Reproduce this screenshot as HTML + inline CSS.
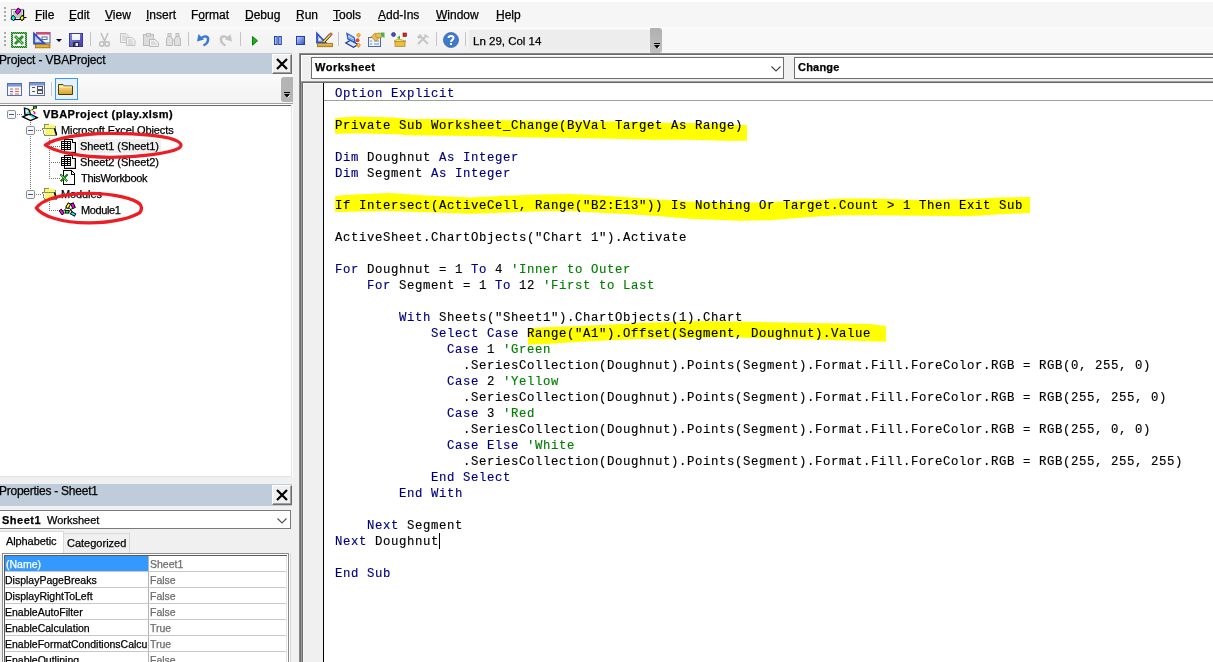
<!DOCTYPE html>
<html><head><meta charset="utf-8">
<style>
*{margin:0;padding:0;box-sizing:border-box}
html,body{width:1213px;height:662px;overflow:hidden;background:#f0f0f0;font-family:"Liberation Sans",sans-serif;position:relative}
.a{position:absolute}
.t{position:absolute;white-space:pre;line-height:12px;color:#000;-webkit-text-stroke:0.25px currentColor}
.ul{position:absolute;height:1px;background:#000}
.grip{position:absolute;width:2px;height:2px;background:#a9a9a9}
.mi{font-size:12px}
.title{position:absolute;background:#bfcddb}
.closeb{position:absolute;background:#f0f0f0;border:1px solid #fff;border-right-color:#6d6d6d;border-bottom-color:#6d6d6d;width:20px;height:20px;box-shadow:inset -1px -1px 0 #a0a0a0}
.sep{position:absolute;width:1px;height:14px;background:#c5c5c5;top:32px}
.code{font-family:"Liberation Mono",monospace;font-size:12.3px;letter-spacing:0.62px;line-height:16px;white-space:pre;color:#000;-webkit-text-stroke:0.15px currentColor}
.k{color:#00007f}
.c{color:#007f00}
.tr{font-size:11px;letter-spacing:-0.25px}
.pg{font-size:10.5px}
svg{position:absolute;overflow:visible}
</style></head><body>
<!-- menu bar -->
<div class="a" style="left:0;top:0;width:1213px;height:2px;background:#fff"></div>
<div class="a" style="left:0;top:2px;width:1213px;height:25px;background:#f6f6f6"></div>
<div class="grip" style="left:4px;top:7px"></div>
<div class="grip" style="left:4px;top:11px"></div>
<div class="grip" style="left:4px;top:15px"></div>
<div class="grip" style="left:4px;top:19px"></div>
<svg style="left:10px;top:7px" width="17" height="15" viewBox="0 0 17 15">
<rect x="1.5" y="2.5" width="12" height="10" fill="#fff" stroke="#8a8a8a" stroke-width="1.2"/>
<rect x="3" y="4" width="9" height="7" fill="#c4c4c4"/>
<path d="M1.5 12.5 H13.5 V3" fill="none" stroke="#000" stroke-width="1.2"/>
<path d="M8.3 1 L11 3.5 L7.8 7.3 L5.2 4.8Z" fill="#ff00ff" stroke="#000" stroke-width="1"/>
<path d="M3 8.2 L5.6 10.9 L3.6 13.9 L1 11.2Z" fill="#00ffff" stroke="#000" stroke-width="1"/>
<path d="M12.3 8.2 L14.2 10.9 L12 13.9 L10 11.2Z" fill="#ffff00" stroke="#000" stroke-width="1"/>
<path d="M14 10.5 H16.5" stroke="#000" stroke-width="1"/>
</svg>
<div class="t mi" style="left:35px;top:9px">File</div><div class="ul" style="left:35px;top:20px;width:6px"></div>
<div class="t mi" style="left:69px;top:9px">Edit</div><div class="ul" style="left:69px;top:20px;width:6px"></div>
<div class="t mi" style="left:105px;top:9px">View</div><div class="ul" style="left:105px;top:20px;width:7px"></div>
<div class="t mi" style="left:146px;top:9px">Insert</div><div class="ul" style="left:146px;top:20px;width:3px"></div>
<div class="t mi" style="left:191px;top:9px">Format</div><div class="ul" style="left:199px;top:20px;width:6px"></div>
<div class="t mi" style="left:245px;top:9px">Debug</div><div class="ul" style="left:245px;top:20px;width:8px"></div>
<div class="t mi" style="left:296px;top:9px">Run</div><div class="ul" style="left:296px;top:20px;width:7px"></div>
<div class="t mi" style="left:333px;top:9px">Tools</div><div class="ul" style="left:333px;top:20px;width:7px"></div>
<div class="t mi" style="left:378px;top:9px">Add-Ins</div><div class="ul" style="left:378px;top:20px;width:7px"></div>
<div class="t mi" style="left:436px;top:9px">Window</div><div class="ul" style="left:436px;top:20px;width:11px"></div>
<div class="t mi" style="left:496px;top:9px">Help</div><div class="ul" style="left:496px;top:20px;width:8px"></div>
<!-- toolbar -->
<div class="a" style="left:0;top:27px;width:1213px;height:2px;background:#fbfbfb"></div>
<div class="a" style="left:0;top:29px;width:1213px;height:24px;background:#f8f8f8"></div>
<div class="a" style="left:0;top:29px;width:662px;height:24px;background:linear-gradient(#f7f7f7,#f1f1f1)"></div>
<div class="grip" style="left:4px;top:32px"></div>
<div class="grip" style="left:4px;top:36px"></div>
<div class="grip" style="left:4px;top:40px"></div>
<div class="grip" style="left:4px;top:44px"></div>
<!-- excel -->
<svg style="left:11px;top:32px" width="16" height="16" viewBox="0 0 16 16">
<defs><pattern id="xck" width="2" height="2" patternUnits="userSpaceOnUse"><rect width="2" height="2" fill="#7cc07c"/><rect width="1" height="1" fill="#0f7a0f"/><rect x="1" y="1" width="1" height="1" fill="#0f7a0f"/></pattern></defs>
<rect x="0" y="0" width="16" height="16" fill="url(#xck)"/>
<rect x="2" y="2" width="12" height="12" fill="#fff"/>
<path d="M4 4 L12 12 M12 4 L4 12" stroke="#2f8f2f" stroke-width="3"/>
<path d="M4.5 4.5 L11.5 11.5" stroke="#d8f0d8" stroke-width=".7"/>
</svg>
<!-- userform -->
<svg style="left:33px;top:32px" width="18" height="16" viewBox="0 0 18 16">
<rect x="3.5" y="0.5" width="13.5" height="10.5" fill="#f4f6fb" stroke="#4a5a90" stroke-width="1"/>
<rect x="3" y="0" width="14" height="2.6" fill="#d04a78"/>
<rect x="9" y="5" width="5" height="2.5" fill="#fff" stroke="#5a6a98" stroke-width="1"/>
<path d="M1 1.5 L11.5 11.5 H1Z" fill="#b8c8f0" stroke="#2d50c8" stroke-width="1.8"/>
<circle cx="4.5" cy="8.5" r="1" fill="#fff"/>
<rect x="2.5" y="12.3" width="14.5" height="3.5" fill="#d8a020" stroke="#a07010" stroke-width=".8"/>
<path d="M4 13.5 V14.5 M6 13.5 V14.5 M8 13.5 V14.5 M10 13.5 V14.5 M12 13.5 V14.5 M14 13.5 V14.5" stroke="#fff0c0" stroke-width=".8"/>
</svg>
<svg style="left:56px;top:39px" width="6" height="3" viewBox="0 0 6 3"><path d="M0 0 H6 L3 3Z" fill="#000"/></svg>
<!-- save -->
<svg style="left:69px;top:33px" width="14" height="14" viewBox="0 0 14 14">
<defs><linearGradient id="gsv" x1="0" y1="0" x2="1" y2="1"><stop offset="0" stop-color="#8a8ae8"/><stop offset="1" stop-color="#3a3aa8"/></linearGradient></defs>
<rect x="0" y="0" width="14" height="14" fill="url(#gsv)"/>
<rect x="0.5" y="0.5" width="13" height="13" fill="none" stroke="#3a3a90" stroke-width="1"/>
<rect x="3" y="1" width="8" height="6" fill="#f4f4ff"/>
<rect x="4" y="9" width="6" height="5" fill="#2a2a50"/>
<rect x="6.5" y="10" width="2.5" height="3" fill="#e8e8f0"/>
</svg>
<div class="sep" style="left:90px"></div>
<!-- cut -->
<svg style="left:99px;top:33px" width="11" height="14" viewBox="0 0 11 14">
<path d="M2 0 L6 9 M9 0 L5 9" stroke="#bdbdbd" stroke-width="1.5"/>
<circle cx="2.8" cy="11" r="2.2" fill="none" stroke="#bdbdbd" stroke-width="1.5"/>
<circle cx="8.2" cy="11" r="2.2" fill="none" stroke="#bdbdbd" stroke-width="1.5"/>
</svg>
<!-- copy -->
<svg style="left:120px;top:33px" width="16" height="13" viewBox="0 0 16 13">
<path d="M0.5 0.5 H6 L8 2.5 V9.5 H0.5Z" fill="#f0f0f0" stroke="#c2c2c2"/>
<path d="M6.5 4.5 H12 L15 7.5 V12.5 H6.5Z" fill="#f0f0f0" stroke="#c2c2c2"/>
<path d="M2 3 H6 M2 5 H6 M2 7 H6 M8 7 H12 M8 9 H13 M8 11 H13" stroke="#c8c8c8"/>
</svg>
<!-- paste -->
<svg style="left:143px;top:33px" width="16" height="14" viewBox="0 0 16 14">
<rect x="0.5" y="1.5" width="10" height="11" fill="#dcdcdc" stroke="#bababa"/>
<rect x="3.5" y="0.5" width="4" height="2.5" fill="#e8e8e8" stroke="#bababa"/>
<path d="M6.5 6.5 H12 L15.5 9.5 V13.5 H6.5Z" fill="#f0f0f0" stroke="#bababa"/>
<path d="M8 9 H12 M8 11 H14" stroke="#c8c8c8"/>
</svg>
<!-- find -->
<svg style="left:166px;top:33px" width="15" height="13" viewBox="0 0 15 13">
<rect x="2" y="0.5" width="3" height="3" fill="#e0e0e0" stroke="#bdbdbd"/>
<rect x="10" y="0.5" width="3" height="3" fill="#e0e0e0" stroke="#bdbdbd"/>
<path d="M0.5 12.5 V6 L2 3.5 H5 L6.5 6 V12.5Z M8.5 12.5 V6 L10 3.5 H13 L14.5 6 V12.5Z" fill="#e0e0e0" stroke="#bababa"/>
<rect x="6.5" y="6" width="2" height="3" fill="#cfcfcf"/>
</svg>
<div class="sep" style="left:188px"></div>
<!-- undo -->
<svg style="left:197px;top:33px" width="13" height="13" viewBox="0 0 13 13">
<path d="M4 5.5 C 7 2, 12 3, 11 7.5 C 10.5 10, 8.5 11.5, 6.5 12.5" fill="none" stroke="#3a78d8" stroke-width="2.4"/>
<path d="M0 8.5 L1.5 1 L7 6.5Z" fill="#3a78d8"/>
</svg>
<!-- redo -->
<svg style="left:219px;top:33px" width="13" height="13" viewBox="0 0 13 13">
<path d="M9 5.5 C 6 2, 1 3, 2 7.5 C 2.5 10, 4.5 11.5, 6.5 12.5" fill="none" stroke="#c4c4c4" stroke-width="2.4"/>
<path d="M13 8.5 L11.5 1 L6 6.5Z" fill="#c4c4c4"/>
</svg>
<div class="sep" style="left:240px"></div>
<!-- run -->
<svg style="left:252px;top:36px" width="6" height="10" viewBox="0 0 6 10"><path d="M0.5 0.5 L5.5 4.8 L0.5 9.2Z" fill="#20b020" stroke="#0a7a0a" stroke-width="1"/></svg>
<!-- pause -->
<svg style="left:274px;top:36px" width="8" height="9" viewBox="0 0 8 9">
<rect x="0.5" y="0.5" width="2.6" height="8" fill="#a8c0f4" stroke="#2040b0"/><rect x="4.7" y="0.5" width="2.6" height="8" fill="#a8c0f4" stroke="#2040b0"/>
</svg>
<!-- stop -->
<svg style="left:296px;top:36px" width="9" height="9" viewBox="0 0 9 9"><defs><linearGradient id="gs" x1="0" y1="0" x2="1" y2="1"><stop offset="0" stop-color="#c8d4f8"/><stop offset="1" stop-color="#3050c8"/></linearGradient></defs><rect x="0.5" y="0.5" width="8" height="8" fill="url(#gs)" stroke="#2040a8"/></svg>
<!-- design mode -->
<svg style="left:316px;top:32px" width="17" height="15" viewBox="0 0 17 15">
<path d="M1 1.5 L9.5 10.5 H1Z" fill="#b0c4f0" stroke="#2d50c8" stroke-width="1.8"/>
<circle cx="3.8" cy="7.6" r="1" fill="#fff"/>
<path d="M7.5 10 L14.5 2.5" stroke="#2a2a2a" stroke-width="3.2"/>
<path d="M7.5 10 L14.5 2.5" stroke="#f4d050" stroke-width="1.8"/>
<circle cx="15" cy="2" r="1.6" fill="#d86050"/>
<rect x="1.5" y="11.3" width="15" height="3.4" fill="#d8a020" stroke="#a07010" stroke-width=".8"/>
<path d="M3 12.3 V13.3 M5 12.3 V13.3 M7 12.3 V13.3 M9 12.3 V13.3 M11 12.3 V13.3 M13 12.3 V13.3 M15 12.3 V13.3" stroke="#fff0c0" stroke-width=".8"/>
</svg>
<div class="sep" style="left:338px"></div>
<!-- project explorer -->
<svg style="left:345px;top:32px" width="17" height="16" viewBox="0 0 17 16">
<path d="M0.8 11 L8.5 15.2 L13 12.5 L5.5 8.3Z" fill="#dfe8f8" stroke="#1d3a8a" stroke-width="1.2"/>
<path d="M2 1.5 L9 5.5 L10 10.5 L3 7Z" fill="#eaf0fc" stroke="#2a5ad0" stroke-width="1.4"/>
<path d="M3.5 3 L8 5.5 M4 5.5 L8.5 8" stroke="#5a9af0" stroke-width="1.1"/>
<path d="M13.5 1 L15.5 3 L13.5 5.5 L11.5 3Z" fill="#f0c040" stroke="#c08000" stroke-width=".7"/>
<circle cx="12.5" cy="8.2" r="2" fill="#e84830"/>
<path d="M13.5 11 L15.5 13 L13.5 15.5 L11.5 13Z" fill="#f0c040" stroke="#c08000" stroke-width=".7"/>
</svg>
<!-- properties -->
<svg style="left:368px;top:32px" width="17" height="15" viewBox="0 0 17 15">
<rect x="0.5" y="5.5" width="12" height="9" fill="#eef2fa" stroke="#4a6aa8"/>
<path d="M2 9 H4 M6 9 H11 M2 12 H4 M6 12 H11" stroke="#7a8ab8"/>
<path d="M3 5 L7 1 L12 5 L8 9Z" fill="#e8c050" stroke="#b08020" stroke-width=".7"/>
<ellipse cx="11" cy="3.5" rx="3.5" ry="2.5" fill="#e8c050" stroke="#b08020" stroke-width=".7"/>
<path d="M13 0.5 L16.5 0.5 L16.5 6 L13 4Z" fill="#50b050"/>
</svg>
<!-- object browser -->
<svg style="left:391px;top:32px" width="17" height="15" viewBox="0 0 17 15">
<circle cx="2.5" cy="2.5" r="2" fill="#4050d0" stroke="#202070" stroke-width=".6"/>
<path d="M6 5.5 L9 3.5 V7.5Z" fill="#40b040"/>
<rect x="12" y="1" width="3.5" height="3.5" fill="#e02020" stroke="#801010" stroke-width=".6"/>
<path d="M3 9 L7 7 L15 9 L11 11Z" fill="#f8e070" stroke="#b09020" stroke-width=".7"/>
<rect x="4" y="9.5" width="10" height="5" fill="#e8c040" stroke="#b08020" stroke-width=".7"/>
</svg>
<!-- toolbox -->
<svg style="left:417px;top:34px" width="12" height="11" viewBox="0 0 12 11">
<path d="M1 10 L9 2 M3 2 L11 10" stroke="#c4c4c4" stroke-width="2"/>
<path d="M0 3 L3 0 L5 2 L2 5Z M8 0 L12 3 L11 4 L7 1Z" fill="#c4c4c4"/>
</svg>
<div class="sep" style="left:436px"></div>
<!-- help -->
<svg style="left:443px;top:32px" width="16" height="16" viewBox="0 0 16 16">
<circle cx="8" cy="8" r="7.6" fill="#3d79cc"/>
<circle cx="8" cy="8" r="7.6" fill="none" stroke="#2a5aa8" stroke-width=".6"/>
<path d="M5.5 6 C5.5 3.2, 10.5 3.2, 10.5 6 C10.5 7.8, 8 8, 8 10" fill="none" stroke="#fff" stroke-width="2"/>
<rect x="7" y="11" width="2" height="2" fill="#fff"/>
</svg>
<div class="sep" style="left:465px"></div>
<div class="a" style="left:469px;top:30px;width:181px;height:20px;background:#ededed"></div>
<div class="t" style="left:473px;top:35px;font-size:11.5px;line-height:12px">Ln 29, Col 14</div>
<div class="a" style="left:650px;top:28px;width:12px;height:25px;background:linear-gradient(#b0b0b0,#c0c0c0);border-radius:1px 3px 3px 1px"></div>
<svg style="left:653px;top:43px" width="8" height="6" viewBox="0 0 8 6"><path d="M1 0.5 H7" stroke="#000"/><path d="M1 2 H7 L4 5.5Z" fill="#000"/><path d="M5 5 L7 3" stroke="#fff"/></svg>
<!-- project window -->
<div class="title" style="left:0;top:53px;width:292px;height:21px"></div>
<div class="t" style="left:-1px;top:54px;font-size:12px;letter-spacing:-0.15px">Project - VBAProject</div>
<div class="closeb" style="left:272px;top:54px"></div>
<svg style="left:276px;top:58px" width="12" height="12" viewBox="0 0 12 12"><path d="M1 1 L11 11 M11 1 L1 11" stroke="#000" stroke-width="2.2"/></svg>
<div class="a" style="left:0;top:74px;width:293px;height:29px;background:linear-gradient(#fbfbfb,#f3f3f3)"></div>
<!-- view code -->
<svg style="left:7px;top:83px" width="15" height="13" viewBox="0 0 15 13">
<rect x="0.5" y="0.5" width="14" height="12" fill="#f4f6fc" stroke="#5570b0"/>
<rect x="1" y="1" width="13" height="2.5" fill="#7a98d8"/>
<path d="M3 6 H6 M8 6 H12 M3 8.5 H6 M8 8.5 H12 M3 11 H6 M8 11 H12" stroke="#e86a40" stroke-width="1.2"/>
<path d="M3 8.5 H6" stroke="#5a7ab8" stroke-width="1.2"/>
</svg>
<!-- view object -->
<svg style="left:29px;top:82px" width="16" height="14" viewBox="0 0 16 14">
<rect x="0.5" y="0.5" width="15" height="13" fill="#f4f6fc" stroke="#5570b0"/>
<rect x="1" y="1" width="14" height="2.5" fill="#7a98d8"/>
<path d="M3 5.5 H6 M3 9.5 H6" stroke="#555" stroke-width="1"/>
<rect x="8.5" y="4.5" width="5" height="3" fill="#f0f0f0" stroke="#555"/>
<rect x="8.5" y="8.5" width="5" height="3" fill="#f0f0f0" stroke="#555"/>
</svg>
<div class="a" style="left:51px;top:82px;width:1px;height:14px;background:#c8c8c8"></div>
<div class="a" style="left:55px;top:78px;width:23px;height:22px;border:1px solid #3399ff;background:#e5f1fb"></div>
<svg style="left:58px;top:83px" width="15" height="12" viewBox="0 0 15 12">
<defs><linearGradient id="gf" x1="0" y1="0" x2="0" y2="1"><stop offset="0" stop-color="#f8e8a0"/><stop offset="1" stop-color="#d8a020"/></linearGradient></defs>
<path d="M0.5 1.5 H5 L6.5 3 H14.5 V11.5 H0.5Z" fill="url(#gf)" stroke="#4a3a10" stroke-width="1"/>
<path d="M1 4 H14" stroke="#fff3c0"/>
</svg>
<div class="a" style="left:281px;top:77px;width:12px;height:25px;background:#b4b4b4;border-radius:3px 0 0 3px"></div>
<svg style="left:283px;top:92px" width="8" height="8" viewBox="0 0 8 8"><path d="M1 0.5 H7" stroke="#000"/><path d="M1 2 H7 L4 5.5Z" fill="#000"/><path d="M4.5 5.5 L7 3" stroke="#fff"/></svg>

<!-- tree view -->
<div class="a" style="left:0;top:103px;width:293px;height:1px;background:#a0a0a0"></div>
<div class="a" style="left:0;top:104px;width:293px;height:1px;background:#fff"></div>
<div class="a" style="left:0;top:105px;width:291px;height:1px;background:#696969"></div>
<div class="a" style="left:0;top:106px;width:291px;height:370px;background:#fff"></div>
<div class="a" style="left:291px;top:105px;width:1px;height:372px;background:#e3e3e3"></div>
<div class="a" style="left:292px;top:104px;width:1px;height:373px;background:#fff"></div>
<div class="a" style="left:0;top:476px;width:292px;height:1px;background:#e3e3e3"></div>
<svg style="left:0;top:104px" width="292" height="130" viewBox="0 104 292 130" shape-rendering="crispEdges">
<g fill="#777">
<!-- dotted lines -->
<rect x="17" y="114" width="1" height="1"/><rect x="19" y="114" width="1" height="1"/><rect x="21" y="114" width="1" height="1"/>
<rect x="30" y="122" width="1" height="1"/><rect x="30" y="124" width="1" height="1"/>
<rect x="30" y="136" width="1" height="1"/><rect x="30" y="138" width="1" height="1"/><rect x="30" y="140" width="1" height="1"/><rect x="30" y="142" width="1" height="1"/><rect x="30" y="144" width="1" height="1"/><rect x="30" y="146" width="1" height="1"/><rect x="30" y="148" width="1" height="1"/><rect x="30" y="150" width="1" height="1"/><rect x="30" y="152" width="1" height="1"/><rect x="30" y="154" width="1" height="1"/><rect x="30" y="156" width="1" height="1"/><rect x="30" y="158" width="1" height="1"/><rect x="30" y="160" width="1" height="1"/><rect x="30" y="162" width="1" height="1"/><rect x="30" y="164" width="1" height="1"/><rect x="30" y="166" width="1" height="1"/><rect x="30" y="168" width="1" height="1"/><rect x="30" y="170" width="1" height="1"/><rect x="30" y="172" width="1" height="1"/><rect x="30" y="174" width="1" height="1"/><rect x="30" y="176" width="1" height="1"/><rect x="30" y="178" width="1" height="1"/><rect x="30" y="180" width="1" height="1"/><rect x="30" y="182" width="1" height="1"/><rect x="30" y="184" width="1" height="1"/><rect x="30" y="186" width="1" height="1"/><rect x="30" y="188" width="1" height="1"/>
<rect x="36" y="130" width="1" height="1"/><rect x="38" y="130" width="1" height="1"/><rect x="40" y="130" width="1" height="1"/>
<rect x="36" y="194" width="1" height="1"/><rect x="38" y="194" width="1" height="1"/><rect x="40" y="194" width="1" height="1"/>
<rect x="49" y="138" width="1" height="1"/><rect x="49" y="140" width="1" height="1"/><rect x="49" y="142" width="1" height="1"/><rect x="49" y="144" width="1" height="1"/><rect x="49" y="146" width="1" height="1"/><rect x="49" y="148" width="1" height="1"/><rect x="49" y="150" width="1" height="1"/><rect x="49" y="152" width="1" height="1"/><rect x="49" y="154" width="1" height="1"/><rect x="49" y="156" width="1" height="1"/><rect x="49" y="158" width="1" height="1"/><rect x="49" y="160" width="1" height="1"/><rect x="49" y="162" width="1" height="1"/><rect x="49" y="164" width="1" height="1"/><rect x="49" y="166" width="1" height="1"/><rect x="49" y="168" width="1" height="1"/><rect x="49" y="170" width="1" height="1"/><rect x="49" y="172" width="1" height="1"/><rect x="49" y="174" width="1" height="1"/><rect x="49" y="176" width="1" height="1"/><rect x="49" y="178" width="1" height="1"/>
<rect x="51" y="146" width="1" height="1"/><rect x="53" y="146" width="1" height="1"/><rect x="55" y="146" width="1" height="1"/><rect x="57" y="146" width="1" height="1"/><rect x="59" y="146" width="1" height="1"/>
<rect x="51" y="162" width="1" height="1"/><rect x="53" y="162" width="1" height="1"/><rect x="55" y="162" width="1" height="1"/><rect x="57" y="162" width="1" height="1"/><rect x="59" y="162" width="1" height="1"/>
<rect x="51" y="178" width="1" height="1"/><rect x="53" y="178" width="1" height="1"/><rect x="55" y="178" width="1" height="1"/><rect x="57" y="178" width="1" height="1"/><rect x="59" y="178" width="1" height="1"/>
<rect x="49" y="202" width="1" height="1"/><rect x="49" y="204" width="1" height="1"/><rect x="49" y="206" width="1" height="1"/><rect x="49" y="208" width="1" height="1"/><rect x="49" y="210" width="1" height="1"/>
<rect x="51" y="210" width="1" height="1"/><rect x="53" y="210" width="1" height="1"/><rect x="55" y="210" width="1" height="1"/><rect x="57" y="210" width="1" height="1"/><rect x="59" y="210" width="1" height="1"/>
</g>
<!-- expanders -->
<g shape-rendering="auto">
<rect x="7.5" y="110.5" width="8" height="8" rx="1.2" fill="#f6f6f6" stroke="#8e8e8e" stroke-width="1"/>
<rect x="9" y="114" width="5" height="1" fill="#3c5aa8"/>
<rect x="26.5" y="126.5" width="8" height="8" rx="1.2" fill="#f6f6f6" stroke="#8e8e8e" stroke-width="1"/>
<rect x="28" y="130" width="5" height="1" fill="#3c5aa8"/>
<rect x="26.5" y="190.5" width="8" height="8" rx="1.2" fill="#f6f6f6" stroke="#8e8e8e" stroke-width="1"/>
<rect x="28" y="194" width="5" height="1" fill="#3c5aa8"/>
</g>
</svg>
<!-- VBAProject icon -->
<svg style="left:22px;top:106px" width="16" height="16" viewBox="0 0 16 16">
<path d="M0.8 10.8 L8.5 14.6 L15.2 11.6 L7.5 7.8Z" fill="#fff" stroke="#000" stroke-width="1.4"/>
<path d="M2.5 2.2 L6.8 3.5 L8.6 8.8 L2.8 8.2Z" fill="#fff" stroke="#000" stroke-width="1.4"/>
<path d="M3.6 3.2 L5.6 4.2 M4.8 6 L7.4 7.4 M8.8 9.6 L12 11.6" stroke="#00e8f0" stroke-width="1.3"/>
<path d="M8 5 L11 3.5 L12.5 1.5 M11.5 5 L12.5 6.5" stroke="#000" stroke-width="1"/>
<rect x="8.5" y="3.8" width="2.8" height="1.5" fill="#f0e800"/>
<rect x="11.5" y="0.4" width="3.2" height="1.8" fill="#00d800" stroke="#000" stroke-width=".6"/>
<rect x="11.6" y="6" width="1.8" height="2.2" fill="#f000f0"/>
</svg>
<div class="t" style="left:43px;top:108px;font-size:11px;font-weight:bold;letter-spacing:0.45px">VBAProject (play.xlsm)</div>
<!-- folder 1 -->
<svg style="left:42px;top:124px" width="16" height="13" viewBox="0 0 16 13" shape-rendering="crispEdges">
<defs><pattern id="dth" width="2" height="2" patternUnits="userSpaceOnUse"><rect width="2" height="2" fill="#f4f4d0"/><rect width="1" height="1" fill="#ffff00"/><rect x="1" y="1" width="1" height="1" fill="#ffff00"/></pattern></defs>
<path d="M2.5 0.5 H6.5 L7.5 1.5 V2.5 H13.5 V11.5 H2.5Z" fill="#fff" stroke="#888"/>
<rect x="3" y="1" width="10" height="4" fill="url(#dth)"/>
<path d="M0.5 4.5 H13.5 L14.5 11.5 H2.5Z" fill="#fff" stroke="#888"/>
<rect x="3" y="5" width="10" height="6" fill="url(#dth)"/>
<path d="M12.5 4.5 L14.5 11" stroke="#000" stroke-width="1.6" shape-rendering="auto"/>
</svg>
<div class="t tr" style="left:61px;top:124px;letter-spacing:-0.1px">Microsoft Excel Objects</div>
<!-- sheet icons -->
<svg style="left:61px;top:139px" width="16" height="14" viewBox="0 0 16 14" shape-rendering="crispEdges">
<path d="M3.5 0.5 H11.5 L14.5 3.5 V13.5 H3.5Z" fill="#f8f8f8" stroke="#000"/><path d="M13.5 4 V12.5 H4.5" fill="none" stroke="#c8c8c8"/><path d="M11.5 0.5 V3.5 H14.5" fill="#fff" stroke="#000"/>
<rect x="0" y="2" width="10" height="9" fill="#000"/>
<g fill="#fff"><rect x="1" y="3" width="2" height="1"/><rect x="4" y="3" width="2" height="1"/><rect x="7" y="3" width="2" height="1"/><rect x="1" y="5" width="2" height="1"/><rect x="4" y="5" width="2" height="1"/><rect x="7" y="5" width="2" height="1"/><rect x="1" y="7" width="2" height="1"/><rect x="4" y="7" width="2" height="1"/><rect x="7" y="7" width="2" height="1"/><rect x="1" y="9" width="2" height="1"/><rect x="4" y="9" width="2" height="1"/><rect x="7" y="9" width="2" height="1"/></g>
</svg>
<div class="a" style="left:78px;top:139px;width:83px;height:14px;background:#f0f0f0"></div>
<div class="t tr" style="left:80px;top:140px;letter-spacing:-0.08px">Sheet1 (Sheet1)</div>
<svg style="left:61px;top:155px" width="16" height="14" viewBox="0 0 16 14" shape-rendering="crispEdges">
<path d="M3.5 0.5 H11.5 L14.5 3.5 V13.5 H3.5Z" fill="#f8f8f8" stroke="#000"/><path d="M13.5 4 V12.5 H4.5" fill="none" stroke="#c8c8c8"/><path d="M11.5 0.5 V3.5 H14.5" fill="#fff" stroke="#000"/>
<rect x="0" y="2" width="10" height="9" fill="#000"/>
<g fill="#fff"><rect x="1" y="3" width="2" height="1"/><rect x="4" y="3" width="2" height="1"/><rect x="7" y="3" width="2" height="1"/><rect x="1" y="5" width="2" height="1"/><rect x="4" y="5" width="2" height="1"/><rect x="7" y="5" width="2" height="1"/><rect x="1" y="7" width="2" height="1"/><rect x="4" y="7" width="2" height="1"/><rect x="7" y="7" width="2" height="1"/><rect x="1" y="9" width="2" height="1"/><rect x="4" y="9" width="2" height="1"/><rect x="7" y="9" width="2" height="1"/></g>
</svg>
<div class="t tr" style="left:80px;top:156px;letter-spacing:-0.08px">Sheet2 (Sheet2)</div>
<!-- workbook -->
<svg style="left:59px;top:170px" width="17" height="16" viewBox="0 0 17 16" shape-rendering="crispEdges">
<path d="M4.5 0.5 H12 L15.5 4 V14.5 H4.5Z" fill="#fff" stroke="#000"/><path d="M12 0.5 V4 H15.5" fill="#fff" stroke="#000"/>
<path d="M1.5 4.5 L8.5 11.5 M8.5 4.5 L1.5 11.5" stroke="#1a8a1a" stroke-width="2.5"/>
<path d="M2 5 L8 11" stroke="#c0e8c0" stroke-width=".7"/>
</svg>
<div class="t tr" style="left:81px;top:172px;letter-spacing:-0.33px">ThisWorkbook</div>
<!-- folder 2 -->
<svg style="left:42px;top:188px" width="16" height="13" viewBox="0 0 16 13" shape-rendering="crispEdges">
<defs><pattern id="dth" width="2" height="2" patternUnits="userSpaceOnUse"><rect width="2" height="2" fill="#f4f4d0"/><rect width="1" height="1" fill="#ffff00"/><rect x="1" y="1" width="1" height="1" fill="#ffff00"/></pattern></defs>
<path d="M2.5 0.5 H6.5 L7.5 1.5 V2.5 H13.5 V11.5 H2.5Z" fill="#fff" stroke="#888"/>
<rect x="3" y="1" width="10" height="4" fill="url(#dth)"/>
<path d="M0.5 4.5 H13.5 L14.5 11.5 H2.5Z" fill="#fff" stroke="#888"/>
<rect x="3" y="5" width="10" height="6" fill="url(#dth)"/>
<path d="M12.5 4.5 L14.5 11" stroke="#000" stroke-width="1.6" shape-rendering="auto"/>
</svg>
<div class="t tr" style="left:61px;top:188px;letter-spacing:-0.1px">Modules</div>
<!-- module icon -->
<svg style="left:59px;top:202px" width="18" height="15" viewBox="0 0 18 15">
<path d="M4 9.5 L8.5 5 M10 5.5 L15 12 M13.5 6 L9.5 10" stroke="#000" stroke-width="1"/>
<g stroke="#000" stroke-width=".9">
<rect x="7.8" y="1.2" width="2.8" height="5" fill="#ffff00" transform="rotate(30 9.2 3.7)"/>
<rect x="12.6" y="1.2" width="2.8" height="5" fill="#ff00ff" transform="rotate(-25 14 3.7)"/>
<rect x="1.3" y="7.5" width="2.8" height="5" fill="#ff00ff" transform="rotate(-35 2.7 10)"/>
<rect x="6.3" y="8.5" width="3.6" height="2.6" fill="#00ff00"/>
<rect x="11.8" y="10.6" width="4.6" height="2.6" fill="#00ffff" transform="rotate(30 14.1 11.9)"/>
</g>
</svg>
<div class="t tr" style="left:81px;top:204px;letter-spacing:-0.4px">Module1</div>
<!-- red ellipses -->
<svg style="left:0;top:0" width="300" height="240" viewBox="0 0 300 240">
<path d="M45.2 145 C 55 138, 80 133.5, 110 133.3 C 140 133.3, 170 136, 178 141.5 C 182 144, 182 146.5, 178 148.7 C 170 153, 140 157.4, 110 157.4 C 80 157, 55 152, 45.2 145 Z" fill="none" stroke="#ee1c24" stroke-width="3.2" stroke-linejoin="round"/>
<path d="M36.3 207.9 C 42 200, 60 193.5, 89 193.3 C 115 193.3, 135 199, 139.8 204 C 142 206.5, 142 209.5, 139.8 212.6 C 133 217, 115 222.9, 89 222.9 C 60 222.9, 42 215.5, 36.3 207.9 Z" fill="none" stroke="#ee1c24" stroke-width="3.3" stroke-linejoin="round"/>
</svg>
<!-- properties window -->
<div class="title" style="left:0;top:484px;width:292px;height:22px"></div>
<div class="t" style="left:-1px;top:485px;font-size:12px;letter-spacing:-0.25px">Properties - Sheet1</div>
<div class="closeb" style="left:272px;top:485px"></div>
<svg style="left:276px;top:489px" width="12" height="12" viewBox="0 0 12 12"><path d="M1 1 L11 11 M11 1 L1 11" stroke="#000" stroke-width="2.2"/></svg>
<div class="a" style="left:0;top:506px;width:293px;height:156px;background:#f0f0f0"></div>
<div class="a" style="left:0;top:510px;width:291px;height:19px;background:#fff;border:1px solid #7a7a7a;border-left:none"></div>
<div class="t" style="left:2px;top:514px;font-size:11px;font-weight:bold;letter-spacing:0.5px">Sheet1</div>
<div class="t" style="left:47px;top:514px;font-size:11px">Worksheet</div>
<svg style="left:277px;top:518px" width="10" height="6" viewBox="0 0 10 6"><path d="M0.5 0.5 L5 5 L9.5 0.5" fill="none" stroke="#555" stroke-width="1.2"/></svg>
<!-- tabs -->
<div class="a" style="left:0;top:531px;width:64px;height:23px;background:#fff;border:1px solid #d9d9d9;border-left:none;border-bottom:none"></div>
<div class="t tr" style="left:6px;top:535px;letter-spacing:-0.1px">Alphabetic</div>
<div class="a" style="left:63px;top:533px;width:67px;height:20px;background:#f0f0f0;border:1px solid #d9d9d9;border-bottom:none"></div>
<div class="t tr" style="left:67px;top:537px;letter-spacing:0">Categorized</div>
<!-- grid -->
<div class="a" style="left:2px;top:553px;width:288px;height:109px;background:#8c8c8c"></div>
<div class="a" style="left:3px;top:554px;width:286px;height:108px;background:#fff"></div>
<div class="a" style="left:4px;top:555px;width:284px;height:107px;background:#5a5a5a"></div>
<div class="a" style="left:5px;top:556px;width:282px;height:106px;background:#fff"></div>
<div class="a" style="left:5px;top:556px;width:143px;height:15px;background:#3399ff"></div>
<div class="a" style="left:148px;top:556px;width:1px;height:106px;background:#b4b4b4"></div>
<div class="a" style="left:286px;top:556px;width:1px;height:106px;background:#e3e3e3"></div>
<div class="a" style="left:287px;top:555px;width:1px;height:107px;background:#fff"></div>
<div class="a" style="left:288px;top:553px;width:1px;height:109px;background:#8a8a8a"></div>
<div class="a" style="left:289px;top:553px;width:1px;height:109px;background:#fff"></div>
<div class="a" style="left:290px;top:553px;width:1px;height:109px;background:#d8d8d8"></div>
<div class="a" style="left:5px;top:571px;width:281px;height:1px;background:#c8c8c8"></div>
<div class="a" style="left:5px;top:587px;width:281px;height:1px;background:#c8c8c8"></div>
<div class="a" style="left:5px;top:603px;width:281px;height:1px;background:#c8c8c8"></div>
<div class="a" style="left:5px;top:619px;width:281px;height:1px;background:#c8c8c8"></div>
<div class="a" style="left:5px;top:635px;width:281px;height:1px;background:#c8c8c8"></div>
<div class="a" style="left:5px;top:651px;width:281px;height:1px;background:#c8c8c8"></div>
<div class="a" style="left:5px;top:556px;width:143px;height:106px;overflow:hidden">
<div class="t pg" style="left:1px;top:2px;color:#fff">(Name)</div>
<div class="t pg" style="left:0px;top:18px">DisplayPageBreaks</div>
<div class="t pg" style="left:0px;top:34px">DisplayRightToLeft</div>
<div class="t pg" style="left:0px;top:50px">EnableAutoFilter</div>
<div class="t pg" style="left:0px;top:66px">EnableCalculation</div>
<div class="t pg" style="left:0px;top:82px">EnableFormatConditionsCalculation</div>
<div class="t pg" style="left:0px;top:98px">EnableOutlining</div>
</div>
<div class="t pg" style="left:150px;top:558px;color:#6d6d6d">Sheet1</div>
<div class="t pg" style="left:150px;top:574px;color:#6d6d6d">False</div>
<div class="t pg" style="left:150px;top:590px;color:#6d6d6d">False</div>
<div class="t pg" style="left:150px;top:606px;color:#6d6d6d">False</div>
<div class="t pg" style="left:150px;top:622px;color:#6d6d6d">True</div>
<div class="t pg" style="left:150px;top:638px;color:#6d6d6d">True</div>
<div class="t pg" style="left:150px;top:654px;color:#6d6d6d">False</div>
<!-- code window frame -->
<div class="a" style="left:299px;top:53px;width:914px;height:609px;background:#8a8a8a"></div>
<div class="a" style="left:300px;top:54px;width:913px;height:608px;background:#6a6a6a"></div>
<div class="a" style="left:301px;top:55px;width:912px;height:607px;background:#fff"></div>
<div class="a" style="left:302px;top:56px;width:911px;height:606px;background:#f0f0f0"></div>
<div class="a" style="left:311px;top:57px;width:473px;height:22px;background:#fff;border:1px solid #6e6e6e"></div>
<svg style="left:771px;top:66px" width="10" height="6" viewBox="0 0 10 6"><path d="M0.5 0.5 L5 5 L9.5 0.5" fill="none" stroke="#444" stroke-width="1.1"/></svg>
<div class="a" style="left:794px;top:57px;width:430px;height:22px;background:#fff;border:1px solid #6e6e6e"></div>
<div class="t" style="left:315px;top:61px;font-size:11px;font-weight:bold;letter-spacing:0.5px">Worksheet</div>
<div class="t" style="left:798px;top:61px;font-size:11px;font-weight:bold;letter-spacing:0.2px">Change</div>
<div class="a" style="left:301px;top:81px;width:912px;height:581px;background:#9c9c9c"></div>
<div class="a" style="left:302px;top:82px;width:911px;height:580px;background:#6a6a6a"></div>
<div class="a" style="left:303px;top:83px;width:910px;height:579px;background:#f8f8f8"></div>
<div class="a" style="left:304px;top:84px;width:909px;height:578px;background:#fff"></div>
<div class="a" style="left:304px;top:84px;width:19px;height:578px;background:#f0f0f0"></div>
<div class="a" style="left:323px;top:83px;width:1px;height:579px;background:#000"></div>
<div class="a" style="left:324px;top:100px;width:889px;height:1px;background:#a0a0a0"></div>

<div class="a code" style="left:335px;top:86px"><span class="k">Option Explicit</span>

<span class="k">Private Sub</span> Worksheet_Change(<span class="k">ByVal</span> Target <span class="k">As</span> Range)

<span class="k">Dim</span> Doughnut <span class="k">As Integer</span>
<span class="k">Dim</span> Segment <span class="k">As Integer</span>

<span class="k">If</span> Intersect(ActiveCell, Range("B2:E13")) <span class="k">Is Nothing Or</span> Target.Count &gt; 1 <span class="k">Then Exit Sub</span>

ActiveSheet.ChartObjects("Chart 1").Activate

<span class="k">For</span> Doughnut = 1 <span class="k">To</span> 4 <span class="c">'Inner to Outer</span>
    <span class="k">For</span> Segment = 1 <span class="k">To</span> 12 <span class="c">'First to Last</span>

        <span class="k">With</span> Sheets("Sheet1").ChartObjects(1).Chart
            <span class="k">Select Case</span> Range("A1").Offset(Segment, Doughnut).Value
              <span class="k">Case</span> 1 <span class="c">'Green</span>
                .SeriesCollection(Doughnut).Points(Segment).Format.Fill.ForeColor.RGB = RGB(0, 255, 0)
              <span class="k">Case</span> 2 <span class="c">'Yellow</span>
                .SeriesCollection(Doughnut).Points(Segment).Format.Fill.ForeColor.RGB = RGB(255, 255, 0)
              <span class="k">Case</span> 3 <span class="c">'Red</span>
                .SeriesCollection(Doughnut).Points(Segment).Format.Fill.ForeColor.RGB = RGB(255, 0, 0)
              <span class="k">Case Else</span> <span class="c">'White</span>
                .SeriesCollection(Doughnut).Points(Segment).Format.Fill.ForeColor.RGB = RGB(255, 255, 255)
            <span class="k">End Select</span>
        <span class="k">End With</span>

    <span class="k">Next</span> Segment
<span class="k">Next</span> Doughnut

<span class="k">End Sub</span></div>
<div class="a" style="left:439px;top:533px;width:1px;height:16px;background:#000"></div>
<svg style="left:0;top:0;mix-blend-mode:multiply" width="1213" height="662" viewBox="0 0 1213 662">
<g fill="#ffff00">
<path d="M335 118 L357 116.5 L375 117 L395 117.5 L410 119 L450 119 L485 120 L520 120.5 L570 121 L615 121.5 L655 122.5 L690 123 L725 124 L740 125 L747 125 L747 140.7 L725 140.7 L690 139.7 L655 139.7 L615 138.7 L570 138 L520 137.2 L485 136.2 L450 135.7 L410 135.2 L395 134.3 L357 133.3 L335 133.8Z"/>
<path d="M335 196 L345 195 L365 194 L390 193 L425 195.4 L470 197.4 L500 196 L540 194.4 L570 194 L600 195.4 L630 197.4 L660 199.4 L690 201.5 L740 203 L770 202 L810 200.4 L840 198.4 L870 198.4 L920 200 L970 199 L1000 197.4 L1030 197 L1030 213 L1000 214.2 L970 216.2 L920 215.7 L870 215.2 L840 215.2 L810 217 L770 220.2 L740 220.7 L690 218.7 L660 216.2 L630 214.2 L600 212.8 L570 211 L540 211.3 L500 212.8 L470 213.7 L450 213 L390 211 L335 212Z"/>
<path d="M528 328.3 L550 327 L580 326 L610 324.4 L640 323 L670 322 L700 321 L730 321.4 L760 322 L800 323 L840 323.4 L870 324 L886 326 L886 341.7 L870 341.2 L840 340.2 L800 339.2 L760 338.2 L730 337.2 L700 337.7 L670 338.7 L640 339 L610 340.2 L580 341.7 L550 343.7 L528 344.7Z"/>
</g>
</svg>
</body></html>
